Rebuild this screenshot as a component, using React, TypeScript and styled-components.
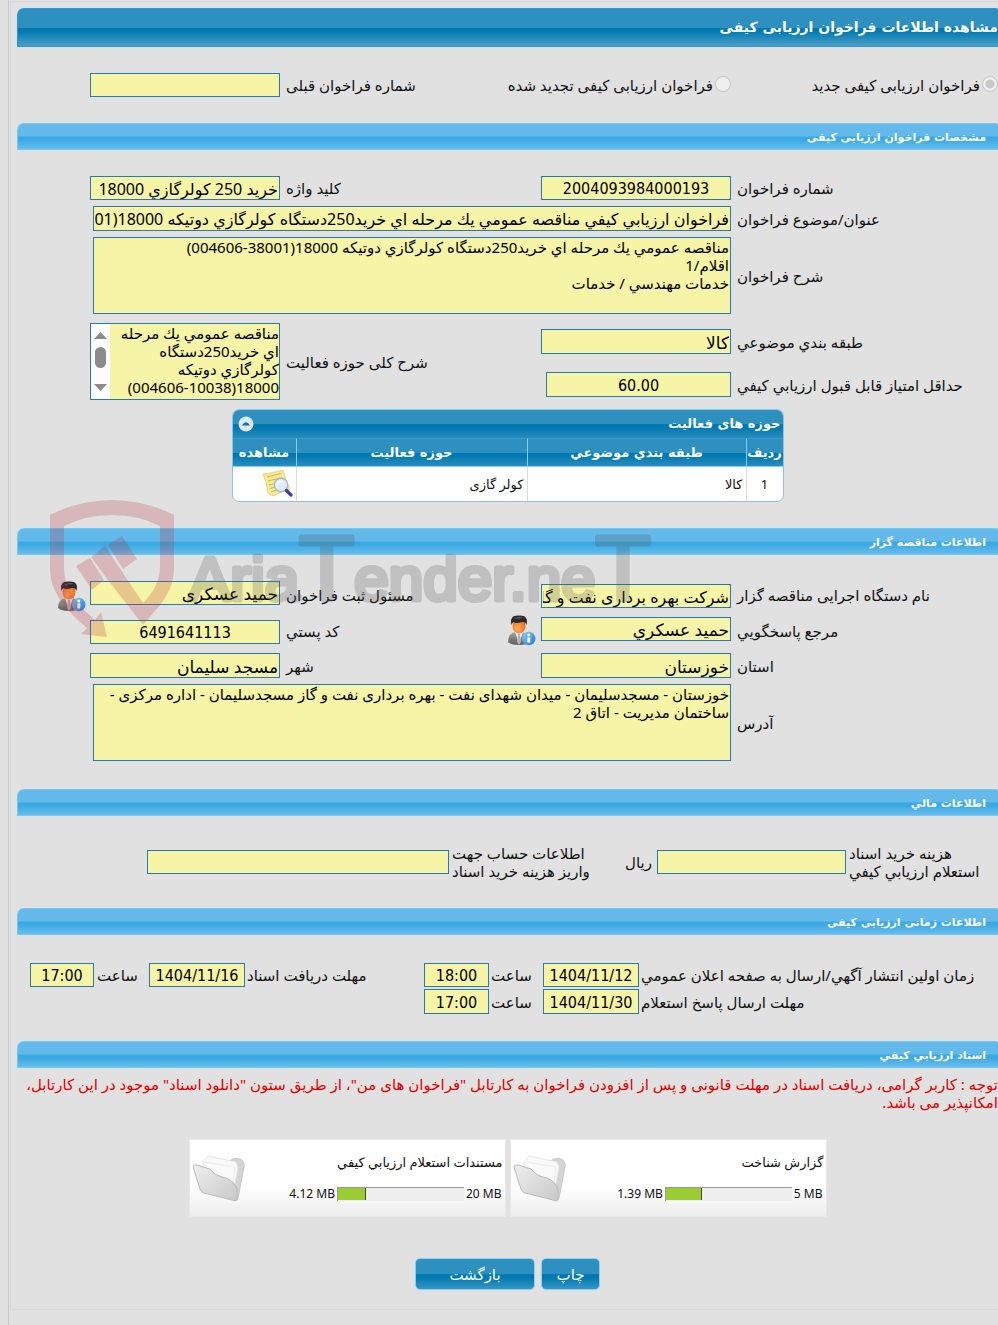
import React from "react";
import styled, { createGlobalStyle, css } from "styled-components";

const textFonts = `"Noto Sans", "DejaVu Sans", sans-serif`;
const headingFonts = `"DejaVu Sans", sans-serif`;
const numberFonts = `"DejaVu Sans Condensed", "DejaVu Sans", sans-serif`;

const Global = createGlobalStyle`
  *, *::before, *::after { box-sizing: border-box; }
  html { overflow-x: hidden; }
  body {
    margin: 0;
    background: #e1e1e1;
    color: #111;
    font-family: ${textFonts};
    font-size: 15px;
    line-height: 18px;
    overflow-x: hidden;
  }
  input, textarea, button { font-family: inherit; margin: 0; }
`;

const Page = styled.div`
  position: relative;
  direction: rtl;
  padding-left: 8px;
`;

const Outer = styled.div`
  border-left: 1px solid #c9c9c9;
  padding: 1px 0 15px 1px;
`;

const Panel = styled.main`
  border: 1px solid #d9d9d9;
  border-right: 0;
  padding: 6px 0 19px 6px;
`;

const TitleBar = styled.h1`
  margin: 0;
  height: 39px;
  border: 1px solid #2d96e0;
  border-right-width: 0;
  border-radius: 7px 2px 0 0;
  background: linear-gradient(#2e90bf 0 50%, #0077b0 51%, #0079b1 60%, #4a9fc6 100%);
  color: #fff;
  font-family: ${headingFonts};
  font-size: 14px;
  font-weight: bold;
  line-height: 37px;
`;

const SectionBar = styled.h2`
  margin: 0;
  height: 27px;
  padding-right: 12px;
  border: 1px solid #6fcbf6;
  border-right-width: 0;
  border-radius: 7px 2px 0 0;
  background: linear-gradient(#62b9ea 0 48%, #3ba9e3 52%, #3ba9e3 62%, #68bdec 100%);
  color: #fff;
  font-family: ${headingFonts};
  font-size: 11px;
  font-weight: bold;
  line-height: 27px;
`;

const Body = styled.div<{ $top: number; $bottom: number }>`
  padding-top: ${(p) => p.$top}px;
  padding-bottom: ${(p) => p.$bottom}px;
`;

const Grid = styled.div<{ $cols: string; $gap?: number; $rows?: string }>`
  display: grid;
  grid-template-columns: ${(p) => p.$cols};
  ${(p) => p.$rows && css`grid-template-rows: ${p.$rows};`}
  align-items: center;
  margin-bottom: ${(p) => p.$gap ?? 0}px;
`;

const FORM = "261fr 196fr 255fr 196fr 73fr";
const MODES = "267fr 300fr 145fr 196fr 73fr";
const MONEY = "149fr 192fr 205fr 305fr 130fr";
const DATES = "357fr 98fr 52fr 67fr 177fr 98fr 52fr 67fr 13fr";

const Label = styled.label`
  min-width: 0;
  text-align: left;
  white-space: nowrap;
`;

const LabelWithIcon = styled.div`
  display: flex;
  flex-direction: row-reverse;
  align-items: center;
  justify-content: space-between;
  min-width: 0;
  height: 27px;
  padding-right: 5px;
`;

const Cell = styled.div<{ $start?: number; $end?: number; $span?: number; $align?: string }>`
  min-width: 0;
  display: flex;
  align-self: ${(p) => p.$align ?? "center"};
  padding-right: ${(p) => p.$start ?? 6}px;
  padding-left: ${(p) => p.$end ?? 0}px;
  grid-column: span ${(p) => p.$span ?? 1};
`;

const fieldLook = css`
  border: 1px solid #2a7aaa;
  border-radius: 0;
  background: #f6f4a6;
  color: #000;
  outline: 0;
`;

const Field = styled.input<{ $center?: boolean; $tall?: boolean; $name?: boolean }>`
  ${fieldLook}
  width: 100%;
  min-width: 0;
  height: ${(p) => (p.$tall ? 25 : 24)}px;
  padding: 1px 1px 0;
  direction: ${(p) => (p.$center ? "ltr" : "rtl")};
  text-align: ${(p) => (p.$center ? "center" : "right")};
  font-size: ${(p) => (p.$name ? 17 : 16)}px;
  ${(p) => p.$center && css`font-family: ${numberFonts};`}
`;

const Area = styled.textarea`
  ${fieldLook}
  display: block;
  width: 100%;
  height: 77px;
  padding: 0 1px;
  resize: none;
  overflow: hidden;
  font-size: 15px;
  line-height: 18px;
`;

const ScrollBox = styled.div`
  ${fieldLook}
  display: flex;
  width: 100%;
  height: 77px;
  textarea { flex: 1; min-width: 0; height: 75px; padding: 0 0 0 6px; border: 0; }
`;

const Track = styled.svg`
  flex: none;
  width: 19px;
  height: 75px;
  background: #fcfcfc;
`;

const RadioCell = styled.label`
  display: flex;
  align-items: center;
  gap: 2px;
  min-width: 0;
  white-space: nowrap;
`;

const Radio = styled.input`
  appearance: none;
  flex: none;
  width: 16px;
  height: 16px;
  align-self: flex-start;
  border: 1px solid #c6c6c6;
  border-radius: 50%;
  background: #efefef;
  &:checked { background: radial-gradient(circle, #c8c8c8 0 4px, #efefef 5px); }
`;

const MoneyMiddle = styled.div`
  display: flex;
  align-items: center;
  justify-content: space-between;
  min-width: 0;
  padding-right: 5px;
`;

const TableBox = styled.section`
  width: 552px;
  margin: 9px auto 0;
  border: 1px solid #8fc3e0;
  border-radius: 7px;
  overflow: hidden;
  background: #fff;
`;

const TableTitle = styled.div`
  display: flex;
  align-items: center;
  justify-content: space-between;
  height: 28px;
  padding: 0 2px 0 5px;
  background: linear-gradient(#2e90bf 0 50%, #0077b0 52%, #0079b1 62%, #2b8cbd 100%);
  color: #fff;
  font-family: ${headingFonts};
  font-size: 13px;
  font-weight: bold;
`;

const Collapse = styled.button`
  width: 16px;
  height: 16px;
  padding: 0;
  border: 0;
  background: none;
  svg { display: block; }
`;

const Table = styled.table`
  width: 100%;
  border-collapse: separate;
  border-spacing: 0;
  table-layout: fixed;
  th {
    height: 29px;
    padding: 0;
    border-top: 1px solid #3b97d6;
    border-bottom: 1px solid #7fd3f7;
    border-left: 1px solid #7fd3f7;
    background: linear-gradient(#2e90bf 0 50%, #0077b0 52%, #0079b1 62%, #2b8cbd 100%);
    color: #fff;
    font-family: ${headingFonts};
    font-size: 13px;
    font-weight: bold;
    white-space: nowrap;
  }
  td {
    height: 34px;
    padding: 0 3px;
    border-left: 1px solid #dcdcdc;
    font-size: 13px;
    text-align: right;
  }
  td:first-child { text-align: center; }
  th:last-child, td:last-child { border-left: 0; }
  td svg { display: block; }
`;

const Notice = styled.p`
  margin: 0 0 28px;
  color: #e00000;
`;

const Cards = styled.div`
  display: flex;
  flex-wrap: wrap;
  justify-content: center;
  gap: 4px;
  margin-bottom: 41px;
`;

const Card = styled.article`
  display: flex;
  justify-content: space-between;
  width: 317px;
  height: 78px;
  border: 1px solid #e8e8e8;
  background: linear-gradient(#fff 0 60%, #ededed 100%);
  font-size: 13px;
`;

const CardInfo = styled.div`
  display: flex;
  flex-direction: column;
  gap: 14px;
  padding: 13px 2px 0 0;
`;

const Usage = styled.div`
  display: flex;
  direction: ltr;
  align-items: center;
  justify-content: flex-end;
  gap: 2px;
  padding-right: 1px;
  font-size: 12px;
`;

const Meter = styled.div`
  width: 127px;
  height: 14px;
  border-top: 1px solid #999;
  border-left: 1px solid #999;
  background: #eee;
`;

const Fill = styled.div`
  height: 12px;
  border-right: 1px solid #444;
  background: #9acd32;
`;

const Actions = styled.div`
  display: flex;
  justify-content: center;
  gap: 6px;
`;

const Action = styled.button<{ $wide?: boolean }>`
  width: ${(p) => (p.$wide ? 120 : 59)}px;
  height: 32px;
  padding: 0;
  border: 1px solid #7fd3f7;
  border-radius: 5px;
  background: linear-gradient(#2e90bf 0 50%, #0077b0 52%, #0079b1 62%, #3a95c3 100%);
  color: #fff;
  font-size: 15px;
`;

const Watermark = styled.svg`
  position: absolute;
  left: 48px;
  top: 498px;
  pointer-events: none;
`;

const FolderArt = styled.svg`
  flex: none;
  margin: 14px 0 0 2px;
`;

const ActivityGrid = styled(Grid)`
  row-gap: 9px;
`;

const Tall = styled.div<{ $col: number }>`
  grid-row: 1 / span 2;
  grid-column: ${(p) => p.$col};
  min-width: 0;
  display: grid;
  align-items: center;
`;

const SecondRow = styled.div`
  grid-column: 1;
  display: grid;
`;

const IconCell = styled.div`
  display: flex;
  align-self: start;
  height: 27px;
  padding-right: 4px;
  svg { flex: none; }
`;

const UserIcon = ({ id }: { id: string }) => (
  <svg width="29" height="31" viewBox="0 0 29 31" aria-hidden="true">
    <defs>
      <radialGradient id={id + "f"} cx=".4" cy=".65" r=".6">
        <stop offset="0" stopColor="#ffb260" />
        <stop offset="1" stopColor="#ee6a1c" />
      </radialGradient>
      <linearGradient id={id + "s"} x1="0" y1="0" x2="0" y2="1">
        <stop offset="0" stopColor="#a2a2a2" />
        <stop offset="1" stopColor="#5c5c5c" />
      </linearGradient>
      <linearGradient id={id + "b"} x1="0" y1="0" x2="1" y2="1">
        <stop offset="0" stopColor="#8ed0fb" />
        <stop offset="1" stopColor="#1c74cf" />
      </linearGradient>
    </defs>
    <path d="M1 27 Q1 18 9 17 L15 17 Q23 19 23 27 Q20 30 12 30 Q4 30 1 27Z" fill={`url(#${id}s)`} />
    <path d="M8 17 L12 29 L16 17Z" fill="#f4f4f4" />
    <path d="M11 19 L13 19 L14 27 L12 30 L10 27Z" fill="#b9b0b4" />
    <ellipse cx="12" cy="11" rx="6.5" ry="7.5" fill={`url(#${id}f)`} />
    <path d="M4.500 10 Q2 0 12 .5 Q22 0 19.500 10 Q18.500 6.500 15 7 Q8 9 6.500 7 Q5 8 4.500 10Z" fill="#2b2b2b" />
    <path d="M7 4 Q11 1 17 3 Q12 3 7 4Z" fill="#777" />
    <circle cx="21.800" cy="23.500" r="6.700" fill={`url(#${id}b)`} />
    <circle cx="21.800" cy="20" r="1.500" fill="#fff" />
    <path d="M20.300 22.500h3v5h-3z" fill="#fff" />
  </svg>
);

const NoteSearch = () => (
  <svg width="30" height="30" viewBox="0 0 30 30" aria-hidden="true">
    <path d="M0 5 Q11 4 20 1 Q22 12 27 20 Q19 22 10 27 Q8 26 5 24 Q4 14 0 5Z" fill="#f7ea93" stroke="#dcc970" strokeWidth=".8" />
    <path d="M4 8 L18 4.500 M5 12 L19 8.500 M6 16 L13 14 M7 19.500 L12 18 M8 23 L14 21" stroke="#cdb65a" strokeWidth="1" />
    <circle cx="18" cy="16" r="6.700" fill="#dcebf6" stroke="#a6bbcf" strokeWidth="1.400" />
    <path d="M14 16 Q15 12 20 12" stroke="#fff" strokeWidth="1.800" fill="none" />
    <path d="M23.500 21.500 L28 26" stroke="#463a9b" strokeWidth="3.200" strokeLinecap="round" />
  </svg>
);

const Folder = ({ id }: { id: string }) => (
  <FolderArt width="56" height="52" viewBox="0 0 56 52" aria-hidden="true">
    <defs>
      <linearGradient id={id} x1="0" y1="0" x2="1" y2="1">
        <stop offset="0" stopColor="#efefef" />
        <stop offset="1" stopColor="#c9c9c9" />
      </linearGradient>
    </defs>
    <path d="M14 14 L36 9 Q40 3 48 5 Q53 7 52 13 L46 44 Q45 48 42 46Z" fill="#d4d4d4" stroke="#c8c8c8" />
    <path d="M11 9 L16 2 L44 8 L46 13 L41 40 L14 26Z" fill="#f9f9f9" stroke="#e6e6e6" />
    <path d="M13 8 L43 13 L40 34" fill="none" stroke="#ebebeb" />
    <path d="M1 13 Q2 10 5 11 L18 15 Q23 22 34 24 Q42 27 45 35 L45 45 Q44 48 40 46 L12 39 Q9 38 8 35Z" fill={`url(#${id})`} stroke="#b9b9b9" />
  </FolderArt>
);

type TextProps = { id: string; value?: string; center?: boolean; tall?: boolean; name?: boolean };

const Text = ({ id, value, center, tall, name }: TextProps) => (
  <Field id={id} type="text" readOnly defaultValue={value ?? ""} $center={center} $tall={tall} $name={name} />
);

const subject = "مناقصه عمومي يك مرحله اي خريد250دستگاه كولرگازي دوتيكه 18000";

const files = [
  { name: "گزارش شناخت", used: "1.39 MB", max: "5 MB", share: 29 },
  { name: "مستندات استعلام ارزيابي كيفي", used: "4.12 MB", max: "20 MB", share: 22 },
];

export default function App() {
  return (
    <Page dir="rtl" lang="fa">
      <Global />
      <Outer>
        <Panel>
          <TitleBar>مشاهده اطلاعات فراخوان ارزیابی کیفی</TitleBar>
          <Body $top={26} $bottom={26}>
            <Grid $cols={MODES}>
              <RadioCell>
                <Radio type="radio" name="mode" disabled defaultChecked />
                فراخوان ارزیابی کیفی جدید
              </RadioCell>
              <RadioCell>
                <Radio type="radio" name="mode" disabled />
                فراخوان ارزیابی کیفی تجدید شده
              </RadioCell>
              <Label htmlFor="prev">شماره فراخوان قبلی</Label>
              <Cell><Text id="prev" /></Cell>
            </Grid>
          </Body>

          <SectionBar>مشخصات فراخوان ارزیابی کیفی</SectionBar>
          <Body $top={26} $bottom={26}>
            <Grid $cols={FORM} $gap={6}>
              <Label htmlFor="num">شماره فراخوان</Label>
              <Cell><Text id="num" value="2004093984000193" center /></Cell>
              <Label htmlFor="key">کلید واژه</Label>
              <Cell><Text id="key" value="خريد 250 كولرگازي 18000" /></Cell>
            </Grid>
            <Grid $cols={FORM} $gap={6}>
              <Label htmlFor="subject">عنوان/موضوع فراخوان</Label>
              <Cell $span={3} $end={3}>
                <Text id="subject" value={`فراخوان ارزيابي كيفي ${subject}(38001-004606)`} tall />
              </Cell>
            </Grid>
            <Grid $cols={FORM} $gap={9}>
              <Label htmlFor="desc">شرح فراخوان</Label>
              <Cell $span={3} $end={3}>
                <Area id="desc" readOnly defaultValue={`${subject}(38001-004606)\nاقلام/1\nخدمات مهندسي / خدمات`} />
              </Cell>
            </Grid>
            <ActivityGrid $cols={FORM} $rows="37px 31px">
              <Label htmlFor="class">طبقه بندي موضوعي</Label>
              <Cell><Text id="class" value="كالا" tall name /></Cell>
              <Tall $col={3}><Label htmlFor="scope">شرح کلی حوزه فعالیت</Label></Tall>
              <Tall $col={4}>
                <Cell>
                  <ScrollBox>
                    <Area id="scope" readOnly defaultValue={`${subject}(10038-004606)`} />
                    <Track viewBox="0 0 19 75" aria-hidden="true">
                      <path d="M3 15 L9.500 8 L16 15Z M3 60 L9.500 67 L16 60Z" fill="#8b8b8b" />
                      <rect x="4" y="23" width="11" height="21" rx="5.500" fill="#8b8b8b" />
                    </Track>
                  </ScrollBox>
                </Cell>
              </Tall>
              <SecondRow>
                <Label htmlFor="score">حداقل امتياز قابل قبول ارزيابي كيفي</Label>
              </SecondRow>
              <Cell $end={5}><Text id="score" value="60.00" center tall /></Cell>
            </ActivityGrid>

            <TableBox>
              <TableTitle>
                حوزه های فعالیت
                <Collapse type="button" aria-label="بستن">
                  <svg width="16" height="16" viewBox="0 0 16 16">
                    <circle cx="8" cy="8" r="7.500" fill="#dbe8f7" />
                    <path d="M4 9.500 Q8 3 12 9.500Z" fill="#1a6f9f" />
                  </svg>
                </Collapse>
              </TableTitle>
              <Table>
                <colgroup>
                  <col style={{ width: 37 }} />
                  <col style={{ width: 219 }} />
                  <col style={{ width: 231 }} />
                  <col />
                </colgroup>
                <thead>
                  <tr>
                    <th>رديف</th>
                    <th>طبقه بندي موضوعي</th>
                    <th>حوزه فعاليت</th>
                    <th>مشاهده</th>
                  </tr>
                </thead>
                <tbody>
                  <tr>
                    <td>1</td>
                    <td>كالا</td>
                    <td>کولر گازی</td>
                    <td><NoteSearch /></td>
                  </tr>
                </tbody>
              </Table>
            </TableBox>
          </Body>

          <SectionBar>اطلاعات مناقصه گزار</SectionBar>
          <Body $top={26} $bottom={28}>
            <Grid $cols={FORM} $gap={9}>
              <Label htmlFor="org">نام دستگاه اجرایی مناقصه گزار</Label>
              <Cell $align="end"><Text id="org" value="شرکت بهره برداری نفت و گاز مسجدسلیمان" /></Cell>
              <Label htmlFor="owner">مسئول ثبت فراخوان</Label>
              <Cell $align="start"><Text id="owner" value="حمید عسکری" name /></Cell>
              <IconCell><UserIcon id="u1" /></IconCell>
            </Grid>
            <Grid $cols={FORM} $gap={9}>
              <Label htmlFor="contact">مرجع پاسخگويي</Label>
              <Cell $align="start"><Text id="contact" value="حميد عسكري" name /></Cell>
              <LabelWithIcon>
                <Label htmlFor="zip">کد پستي</Label>
                <UserIcon id="u2" />
              </LabelWithIcon>
              <Cell $align="end"><Text id="zip" value="6491641113" center /></Cell>
            </Grid>
            <Grid $cols={FORM} $gap={6}>
              <Label htmlFor="state">استان</Label>
              <Cell><Text id="state" value="خوزستان" tall name /></Cell>
              <Label htmlFor="city">شهر</Label>
              <Cell><Text id="city" value="مسجد سلیمان" tall name /></Cell>
            </Grid>
            <Grid $cols={FORM}>
              <Label htmlFor="addr">آدرس</Label>
              <Cell $span={3} $end={3}>
                <Area
                  id="addr"
                  readOnly
                  defaultValue="خوزستان - مسجدسلیمان - میدان شهدای نفت - بهره برداری نفت و گاز مسجدسلیمان - اداره مرکزی - ساختمان مدیریت - اتاق 2"
                />
              </Cell>
            </Grid>
          </Body>

          <SectionBar>اطلاعات مالي</SectionBar>
          <Body $top={28} $bottom={28}>
            <Grid $cols={MONEY}>
              <Label htmlFor="fee">هزینه خرید اسناد<br />استعلام ارزيابي كيفي</Label>
              <Cell $start={3}><Text id="fee" /></Cell>
              <MoneyMiddle>
                <span>ریال</span>
                <Label htmlFor="account">اطلاعات حساب جهت<br />واریز هزینه خرید اسناد</Label>
              </MoneyMiddle>
              <Cell $start={3}><Text id="account" /></Cell>
            </Grid>
          </Body>

          <SectionBar>اطلاعات زمانی ارزیابی کیفی</SectionBar>
          <Body $top={28} $bottom={27}>
            <Grid $cols={DATES} $gap={2}>
              <Label htmlFor="d1">زمان اولين انتشار آگهي/ارسال به صفحه اعلان عمومي</Label>
              <Cell $start={2}><Text id="d1" value="1404/11/12" center /></Cell>
              <Label htmlFor="t1">ساعت</Label>
              <Cell $start={2}><Text id="t1" value="18:00" center /></Cell>
              <Label htmlFor="d2">مهلت دریافت اسناد</Label>
              <Cell $start={2}><Text id="d2" value="1404/11/16" center /></Cell>
              <Label htmlFor="t2">ساعت</Label>
              <Cell $start={3}><Text id="t2" value="17:00" center /></Cell>
            </Grid>
            <Grid $cols={DATES}>
              <Label htmlFor="d3">مهلت ارسال پاسخ استعلام</Label>
              <Cell $start={2}><Text id="d3" value="1404/11/30" center tall /></Cell>
              <Label htmlFor="t3">ساعت</Label>
              <Cell $start={2}><Text id="t3" value="17:00" center tall /></Cell>
            </Grid>
          </Body>

          <SectionBar>اسناد ارزيابي كيفي</SectionBar>
          <Body $top={7} $bottom={0}>
            <Notice>
              توجه : کاربر گرامی، دریافت اسناد در مهلت قانونی و پس از افزودن فراخوان به کارتابل "فراخوان های من"، از طریق ستون "دانلود اسناد" موجود در این کارتابل، امکانپذیر می باشد.
            </Notice>
            <Cards>
              {files.map((f, i) => (
                <Card key={f.name}>
                  <CardInfo>
                    <span>{f.name}</span>
                    <Usage>
                      <span>{f.used}</span>
                      <Meter><Fill style={{ width: `${f.share}%` }} /></Meter>
                      <span>{f.max}</span>
                    </Usage>
                  </CardInfo>
                  <Folder id={`folder${i}`} />
                </Card>
              ))}
            </Cards>
            <Actions>
              <Action type="button">چاپ</Action>
              <Action type="button" $wide>بازگشت</Action>
            </Actions>
          </Body>
        </Panel>
      </Outer>

      <Watermark width="620" height="142" viewBox="0 0 620 142" direction="ltr" aria-hidden="true">
        <g fill="#b9323c" opacity=".23">
          <path d="M2 17 Q32 2 64 2 Q96 2 126 17 L126 70 Q126 90 112 107 L95 127 L60 82 L43 59 L57 48 L73 72 L95 105 Q112 88 112 69 L112 28 Q90 17 64 17 Q38 17 16 28 L16 70 Q16 96 47 122 L53 114 L59 139 L33 136 L39 130 Q2 100 2 72Z" />
          <path d="M60 47 L74 38 L89 61 L75 71Z M28 68 L42 60 L56 82 L44 92Z" />
        </g>
        <text
          x="141"
          y="102"
          fill="#555"
          stroke="#555"
          strokeWidth="5"
          strokeLinejoin="round"
          opacity=".23"
          fontFamily='"Liberation Sans", sans-serif'
          fontSize="62"
        >
          Aria<tspan fontSize="90">T</tspan>ender.ne<tspan fontSize="90">T</tspan>
        </text>
      </Watermark>
    </Page>
  );
}
